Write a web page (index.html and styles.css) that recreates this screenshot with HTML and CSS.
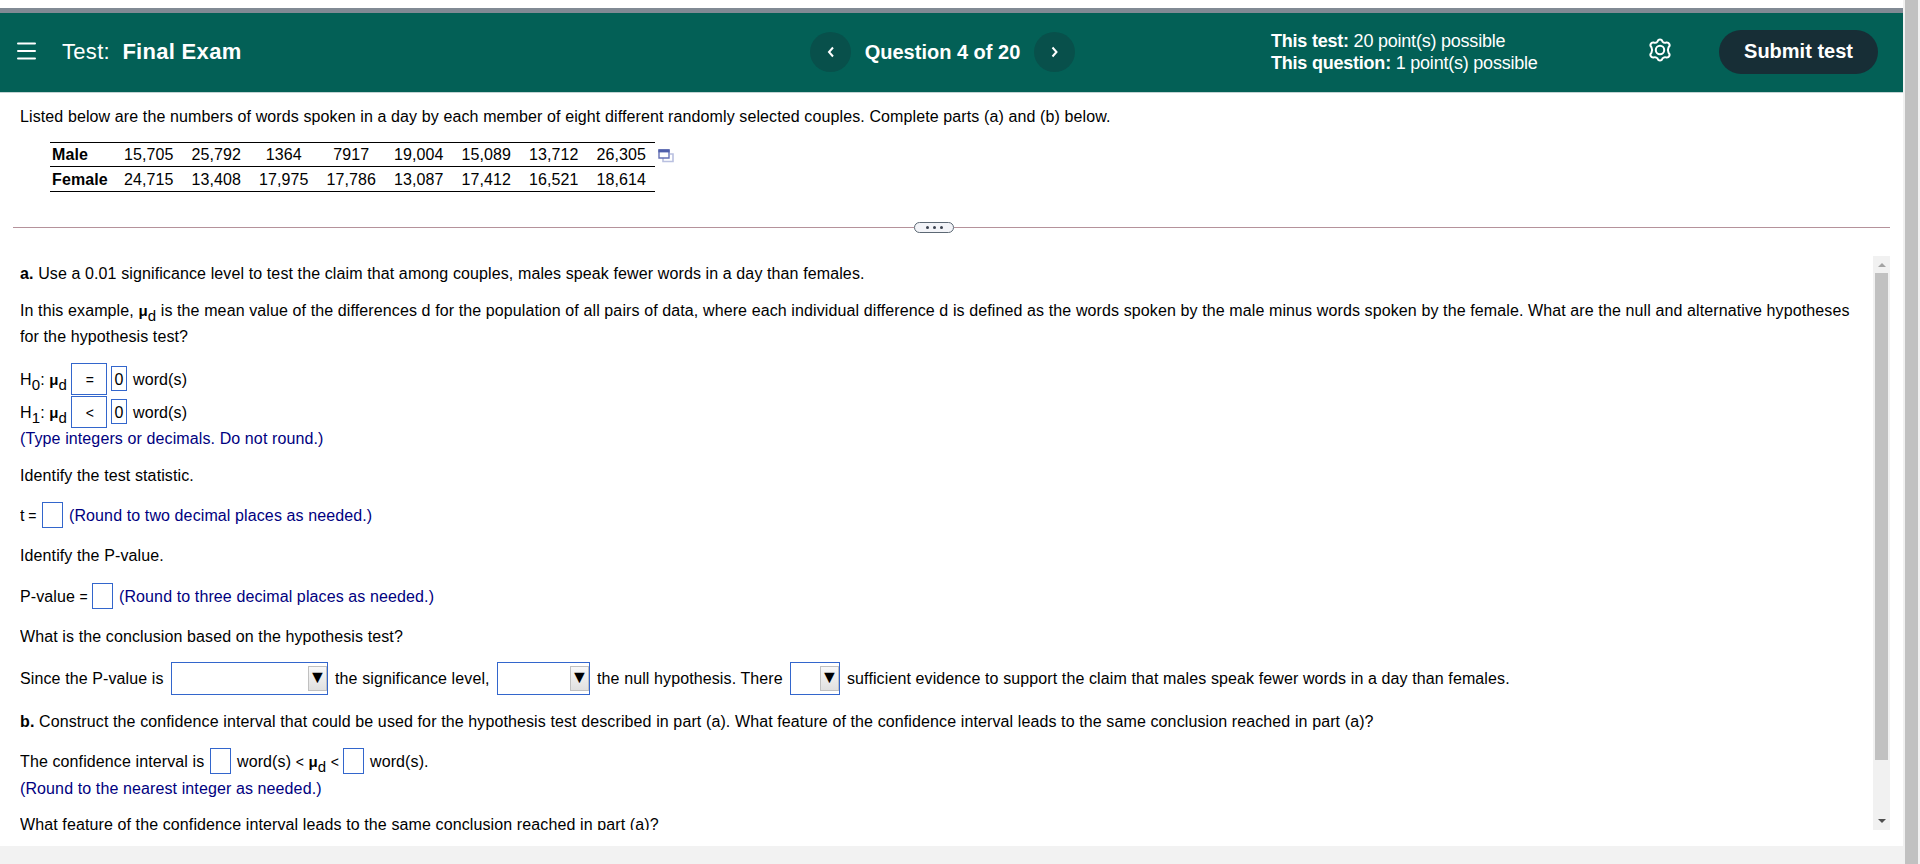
FILE: index.html
```html
<!DOCTYPE html>
<html lang="en">
<head>
  <meta charset="UTF-8">
  <meta name="viewport" content="width=device-width, initial-scale=1.0">
  <title>Test: Final Exam</title>
  <link rel="stylesheet" href="styles.css">
</head>
<body>
  <div class="page">
    <div class="top-strip"></div>

    <!-- Header -->
    <header class="header">
      <div class="header-left">
        <svg class="menu-icon" width="19" height="18" viewBox="0 0 19 18"><path d="M1 1.500h17M1 9h17M1 16.500h17" stroke="#fff" stroke-width="2" stroke-linecap="round"/></svg>
        <div class="title">Test: <b>Final Exam</b></div>
      </div>
      <div class="question-nav">
        <button class="nav-button"><svg width="10" height="12" viewBox="0 0 10 12"><path d="M7 1.5L3 6l4 4.500" fill="none" stroke="#fff" stroke-width="2"/></svg></button>
        <div class="question-title">Question 4 of 20</div>
        <button class="nav-button"><svg width="10" height="12" viewBox="0 0 10 12"><path d="M2.500 1.500L6.500 6l-4 4.500" fill="none" stroke="#fff" stroke-width="2"/></svg></button>
      </div>
      <div class="points">
        <div><b>This test:</b> 20 point(s) possible</div>
        <div><b>This question:</b> 1 point(s) possible</div>
      </div>
      <svg class="gear-icon" width="24" height="24" viewBox="0 0 24 24" fill="none" stroke="#fff" stroke-width="2" stroke-linejoin="round">
        <path d="M9.500 3.600Q10 1.400 12 1.400T14.500 3.600Q16 5.300 18.200 4.600Q20.300 4.200 21.300 6T20.500 9.300Q19.300 12 20.500 14.700Q22.200 16.200 21.300 18T18.200 19.400Q16 18.700 14.500 20.400Q14 22.600 12 22.600T9.500 20.400Q8 18.700 5.800 19.400Q3.700 19.800 2.700 18T3.500 14.700Q4.700 12 3.500 9.300Q1.800 7.800 2.700 6T5.800 4.600Q8 5.300 9.500 3.600Z"/>
        <circle cx="12" cy="12" r="4.200"/>
      </svg>
      <button class="submit-button">Submit test</button>
    </header>

    <!-- Problem statement -->
    <section class="problem">
      <p class="line">Listed below are the numbers of words spoken in a day by each member of eight different randomly selected couples. Complete parts (a) and (b) below.</p>
      <div class="table-row">
        <table class="data-table">
          <tr class="male"><th>Male</th><td>15,705</td><td>25,792</td><td>1364</td><td>7917</td><td>19,004</td><td>15,089</td><td>13,712</td><td>26,305</td></tr>
          <tr class="female"><th>Female</th><td>24,715</td><td>13,408</td><td>17,975</td><td>17,786</td><td>13,087</td><td>17,412</td><td>16,521</td><td>18,614</td></tr>
        </table>
        <svg class="copy-icon" width="16" height="14" viewBox="0 0 16 14">
          <path d="M5 9v3.500h10V5h-3" fill="none" stroke="#b9c0e0" stroke-width="1.600"/>
          <path d="M1 1h10v8H1z" fill="#fff" stroke="#6672b5" stroke-width="1.400"/>
          <path d="M.4 .4h11.200v3H.4z" fill="#5060ab"/>
        </svg>
      </div>
    </section>

    <!-- Divider with drag handle -->
    <div class="divider">
      <span class="rule"></span>
      <span class="handle"><i></i><i></i><i></i></span>
      <span class="rule"></span>
    </div>

    <!-- Questions -->
    <main class="panel">
      <div class="content">
        <p class="line part-a"><b>a.</b> Use a 0.01 significance level to test the claim that among couples, males speak fewer words in a day than females.</p>
        <p class="line intro">In this example, <span class="mu">μ</span><span class="sub">d</span> is the mean value of the differences d for the population of all pairs of data, where each individual difference d is defined as the words spoken by the male minus words spoken by the female. What are the null and alternative hypotheses for the hypothesis test?</p>

        <div class="hypotheses">
          <div class="row">
            <span class="symbol">H<span class="sub">0</span>: <span class="mu">μ</span><span class="sub">d</span></span>
            <span class="relation">=</span><span class="value">0</span><span class="unit">word(s)</span>
          </div>
          <div class="row">
            <span class="symbol">H<span class="sub">1</span>: <span class="mu">μ</span><span class="sub">d</span></span>
            <span class="relation">&lt;</span><span class="value">0</span><span class="unit">word(s)</span>
          </div>
        </div>
        <p class="line hint">(Type integers or decimals. Do not round.)</p>

        <p class="line identify">Identify the test statistic.</p>
        <div class="row answer">
          <span class="t-label">t <span class="op">=</span></span><span class="blank"></span><span class="hint">(Round to two decimal places as needed.)</span>
        </div>
        <p class="line identify-p">Identify the P-value.</p>
        <div class="row answer answer-p">
          <span class="p-label">P-value <span class="op">=</span></span><span class="blank"></span><span class="hint">(Round to three decimal places as needed.)</span>
        </div>
        <p class="line conclusion">What is the conclusion based on the hypothesis test?</p>
        <div class="row sentence">
          <span class="since">Since the P-value is</span>
          <span class="select wide"><span class="arrow">▼</span></span>
          <span class="level">the significance level,</span>
          <span class="select medium"><span class="arrow">▼</span></span>
          <span class="null">the null hypothesis. There</span>
          <span class="select narrow"><span class="arrow">▼</span></span>
          <span>sufficient evidence to support the claim that males speak fewer words in a day than females.</span>
        </div>

        <p class="line part-b"><b>b.</b> Construct the confidence interval that could be used for the hypothesis test described in part (a). What feature of the confidence interval leads to the same conclusion reached in part (a)?</p>
        <div class="row answer interval">
          <span class="interval-label">The confidence interval is</span><span class="blank"></span>
          <span class="bounds">word(s) <span class="op">&lt;</span> <span class="mu">μ</span><span class="sub">d</span> <span class="op">&lt;</span></span><span class="blank"></span><span>word(s).</span>
        </div>
        <p class="line hint">(Round to the nearest integer as needed.)</p>
        <p class="line feature">What feature of the confidence interval leads to the same conclusion reached in part (a)?</p>
      </div>
      <div class="scrollbar">
        <span class="scroll-up"></span>
        <span class="thumb"></span>
        <span class="scroll-down"></span>
      </div>
    </main>
    <footer class="footer"></footer>
  </div>
  <div class="page-scrollbar"></div>
</body>
</html>
```
FILE: styles.css
```css
* {
  box-sizing: border-box;
}

body {
  margin: 0;
  height: 864px;
  display: flex;
  overflow: hidden;
  background: #fff;
  color: #000;
  font-family: "Liberation Sans", Arial, sans-serif;
  font-size: 16px;
  line-height: 26px;
  letter-spacing: 0.111px;
}

p {
  margin: 0;
}

button {
  border: none;
  padding: 0;
  font-family: inherit;
  color: #fff;
}

.page {
  width: 1903px;
  display: flex;
  flex-direction: column;
}

.page-scrollbar {
  width: 17px;
  background: #c1c1c1;
  border-left: 2px solid #f1f1f1;
  border-right: 2px solid #f1f1f1;
}

.top-strip {
  height: 5px;
  margin-top: 8px;
  background: #818a94;
}

/* Header */
.header {
  height: 80px;
  padding-bottom: 2px;
  display: flex;
  align-items: center;
  background: #036056;
  border-bottom: 1px solid #c3d3d3;
  color: #fff;
}

.header-left {
  width: 810px;
  padding-left: 17px;
  display: flex;
  align-items: center;
}

.menu-icon {
  margin-right: 26px;
  margin-top: -1px;
}

.title {
  font-size: 22px;
  letter-spacing: 0.3px;
}

.title b {
  margin-left: 6px;
}

.question-nav {
  width: 461px;
  display: flex;
  align-items: center;
}

.question-title {
  width: 183px;
  text-align: center;
  font-size: 20px;
  font-weight: bold;
  letter-spacing: 0;
}

.nav-button {
  width: 41px;
  height: 40px;
  border-radius: 50%;
  background: #08504b;
  display: flex;
  align-items: center;
  justify-content: center;
}

.points {
  width: 377px;
  font-size: 18px;
  line-height: 22px;
  letter-spacing: -0.22px;
}

.gear-icon {
  margin-right: 47px;
  margin-top: -3px;
}

.submit-button {
  width: 159px;
  height: 44px;
  padding-bottom: 1px;
  border-radius: 22px;
  background: #172e36;
  font-size: 20px;
  font-weight: bold;
}

/* Problem statement */
.problem {
  height: 128px;
  padding: 11px 20px 0;
}

.table-row {
  display: flex;
  margin: 12px 0 0 30px;
}

.data-table {
  width: 605px;
  table-layout: fixed;
  border-collapse: collapse;
  line-height: 22px;
}

.data-table tr {
  border-top: 1px solid #000;
  border-bottom: 1px solid #000;
}

.data-table .male {
  height: 24px;
}

.data-table .female {
  height: 25px;
}

.data-table th {
  width: 65px;
  padding: 1px 0 0 2px;
  text-align: left;
}

.data-table td {
  padding: 1px 0 0;
  text-align: center;
}

.copy-icon {
  margin: 7px 0 0 3px;
}

/* Divider */
.divider {
  height: 12px;
  margin: 0 13px;
  display: flex;
  align-items: center;
}

.rule {
  height: 1px;
  flex: 1;
  background: #b5929b;
}

.rule:first-child {
  flex: none;
  width: 901px;
}

.handle {
  width: 40px;
  height: 11px;
  border: 1px solid #5c6874;
  border-radius: 6px;
  background: #f3f4f8;
  display: flex;
  align-items: center;
  justify-content: center;
  gap: 4px;
}

.handle i {
  width: 3px;
  height: 3px;
  border-radius: 50%;
  background: #3c4350;
}

/* Questions */
.panel {
  height: 574px;
  margin: 23px 13px 0 20px;
  display: flex;
  overflow: hidden;
}

.content {
  width: 1853px;
  padding-top: 5px;
}

.intro {
  width: 1840px;
  margin-top: 11px;
}

.mu {
  font-size: 15px;
  font-weight: bold;
}

.op {
  font-size: 14px;
}

/* Subscript is only slightly smaller than the text, and lowered */
.sub {
  position: relative;
  top: 5px;
  font-size: 15px;
}

.row {
  display: flex;
  align-items: center;
  white-space: nowrap;
}

.row > span {
  flex-shrink: 0;
}

.hint {
  color: #000080;
}

.hypotheses {
  margin-top: 12px;
}

.hypotheses .row {
  height: 33px;
}

.symbol {
  width: 51px;
  padding-top: 2px;
}

.unit {
  padding-top: 2px;
}

.relation {
  width: 36px;
  height: 32px;
  padding-left: 2px;
  line-height: 32px;
  margin-right: 4px;
  border: 1px solid #3366cc;
  font-size: 14px;
  text-align: center;
}

.value {
  width: 16px;
  height: 25px;
  line-height: 25px;
  margin-right: 6px;
  border: 1px solid #3366cc;
  text-align: center;
}

.hypotheses + .hint {
  margin-top: -2px;
}

.blank {
  width: 21px;
  height: 26px;
  margin-right: 6px;
  border: 1px solid #3366cc;
}

.identify {
  margin-top: 11px;
}

.answer {
  height: 26px;
  margin-top: 13px;
}

.answer > span:not(.blank) {
  padding-top: 2px;
}

.identify-p,
.conclusion {
  margin-top: 15px;
}

.answer-p {
  margin-top: 14px;
}

.t-label {
  width: 22px;
  word-spacing: -1px;
}

.p-label {
  width: 72px;
}

.sentence {
  height: 33px;
  margin-top: 12px;
}

.since {
  width: 151px;
}

.level {
  width: 162px;
}

.null {
  width: 193px;
}

.select {
  height: 33px;
  margin-right: 7px;
  border: 1px solid #3366cc;
  display: flex;
  align-items: center;
  justify-content: flex-end;
}

.select.wide {
  width: 157px;
}

.select.medium {
  width: 93px;
}

.select.narrow {
  width: 50px;
}

.arrow {
  width: 19px;
  height: 25px;
  border: 1px solid #c0c0c0;
  background: linear-gradient(#f8f8f8, #e0e0e0);
  font-size: 18px;
  line-height: 20px;
  display: flex;
  justify-content: center;
}

.part-b {
  margin-top: 14px;
}

.interval-label {
  width: 190px;
}

.bounds {
  width: 106px;
}

.interval + .hint {
  margin-top: 2px;
}

.feature {
  margin-top: 10px;
}

/* Inner scrollbar */
.scrollbar {
  width: 17px;
  height: 574px;
  background: #f1f1f1;
  display: flex;
  flex-direction: column;
  align-items: center;
}

.scroll-up {
  margin: 7px 0 6px;
  border: 4px solid transparent;
  border-top: none;
  border-bottom-color: #a3a3a3;
}

.thumb {
  width: 13px;
  height: 487px;
  background: #c1c1c1;
}

.scroll-down {
  margin-top: 59px;
  border: 4px solid transparent;
  border-bottom: none;
  border-top-color: #505050;
}

.footer {
  flex: 1;
  margin-top: 16px;
  background: #f2f2f2;
}
```
